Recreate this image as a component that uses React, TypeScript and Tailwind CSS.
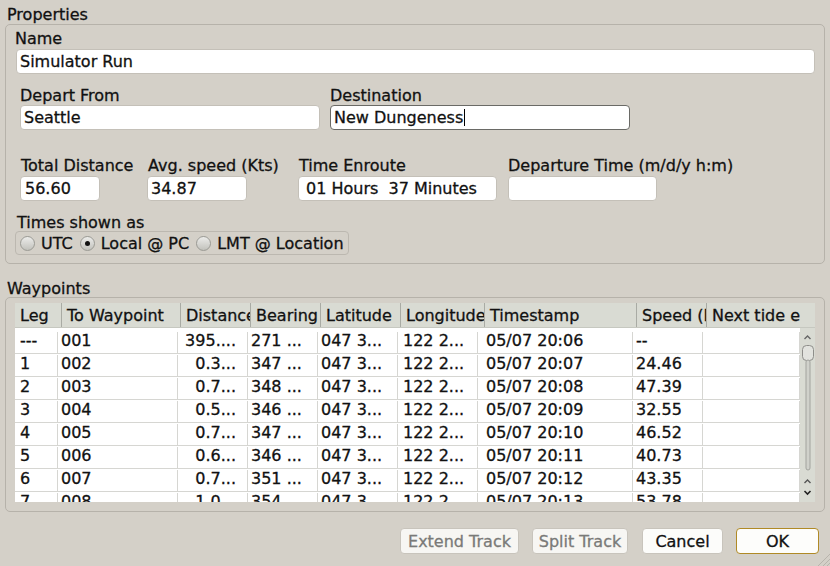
const rows = [
  ["---", "001", "395....", "271 ...", "047 3...", "122 2...", "05/07 20:06", "--"],
  ["1", "002", "0.3...", "347 ...", "047 3...", "122 2...", "05/07 20:07", "24.46"],
  ["2", "003", "0.7...", "348 ...", "047 3...", "122 2...", "05/07 20:08", "47.39"],
  ["3", "004", "0.5...", "346 ...", "047 3...", "122 2...", "05/07 20:09", "32.55"],
  ["4", "005", "0.7...", "347 ...", "047 3...", "122 2...", "05/07 20:10", "46.52"],
  ["5", "006", "0.6...", "346 ...", "047 3...", "122 2...", "05/07 20:11", "40.73"],
  ["6", "007", "0.7...", "351 ...", "047 3...", "122 2...", "05/07 20:12", "43.35"],
  ["7", "008", "1.0...", "354 ...", "047 3...", "122 2...", "05/07 20:13", "53.78"],
];

function Field({ children, className = "" }: { children?: React.ReactNode; className?: string }) {
  return (
    <div
      className={
        "h-[25px] bg-white rounded-[4px] border border-[#c4c0b8] flex items-center whitespace-nowrap overflow-hidden " +
        className
      }
    >
      {children}
    </div>
  );
}

function Radio({ checked }: { checked?: boolean }) {
  return (
    <span className="w-[15px] h-[15px] rounded-full border border-[#9a9a94] bg-gradient-to-b from-[#ececea] to-[#c2c2bc] flex items-center justify-center shrink-0">
      {checked && <span className="w-[5px] h-[5px] rounded-full bg-[#111]" />}
    </span>
  );
}

function Scrollbar() {
  return (
    <svg width="15" height="174" viewBox="0 0 15 174">
      <rect x="0" y="0" width="15" height="174" fill="#d9dbd3" />
      <path d="M4.5 11 L7.5 8 L10.5 11" stroke="#666" strokeWidth="1.4" fill="none" />
      <rect x="2.5" y="17.5" width="11" height="15" rx="4" fill="#e2e3de" stroke="#8e8e8a" />
      <rect x="6" y="32" width="4" height="110" rx="2" fill="#d0d1cb" stroke="#a2a39e" />
      <path d="M4.5 155 L7.5 152 L10.5 155" stroke="#555" strokeWidth="1.4" fill="none" />
      <path d="M4.5 163 L7.5 166 L10.5 163" stroke="#222" strokeWidth="1.6" fill="none" />
    </svg>
  );
}

const headW = ["w-[46px]", "w-[119px]", "w-[70px]", "w-[70px]", "w-[80px]", "w-[84px]", "w-[152px]", "w-[70px]", "w-[94px]"];
const heads = ["Leg", "To Waypoint", "Distance", "Bearing", "Latitude", "Longitude", "Timestamp", "Speed (Kts)", "Next tide event"];
const cellCls = [
  "w-[43px] pl-[5px]",
  "w-[120px] pl-[3px]",
  "w-[70px] pr-[11px] text-right",
  "w-[70px] pl-[3px]",
  "w-[80px] pl-[3px]",
  "w-[80px] pl-[5px]",
  "w-[155px] pl-[8px]",
  "w-[70px] pl-[3px]",
  "w-[97px]",
];

export default function App() {
  return (
    <div
      className="relative w-[830px] h-[566px] bg-[#d4d0c8] text-[16px] leading-[18px] text-[#111] overflow-hidden [-webkit-text-stroke-width:0.3px]"
      style={{ fontFamily: '"DejaVu Sans", Verdana, sans-serif' }}
    >
      <div className="pl-[7px] pt-[6px] h-[24px]">Properties</div>

      <div className="mx-[5px] h-[240px] border border-[#b6b2aa] rounded-[5px] pl-[9px] pr-[9px] pt-[5px]">
        <div>Name</div>
        <Field className="mt-[1px] ml-[1px] pl-[3px]">Simulator Run</Field>

        <div className="mt-[13px] ml-[5px] flex gap-[10px]">
          <div className="w-[300px]">
            <div>Depart From</div>
            <Field className="pl-[3px]">Seattle</Field>
          </div>
          <div className="w-[300px]">
            <div>Destination</div>
            <Field className="pl-[3px] !border-[#6a6a66]">
              New Dungeness
              <span className="w-[1px] h-[17px] bg-black ml-[1px]" />
            </Field>
          </div>
        </div>

        <div className="mt-[27px] ml-[5px] flex">
          <div className="w-[127px]">
            <div className="pl-[1px]">Total Distance</div>
            <Field className="mt-[1px] w-[80px] pl-[4px]">56.60</Field>
          </div>
          <div className="w-[151px]">
            <div className="pl-[1px]">Avg. speed (Kts)</div>
            <Field className="mt-[1px] w-[100px] pl-[3px]">34.87</Field>
          </div>
          <div className="w-[210px]">
            <div className="pl-[1px]">Time Enroute</div>
            <Field className="mt-[1px] w-[199px] pl-[7px] whitespace-pre">01 Hours  37 Minutes</Field>
          </div>
          <div>
            <div>Departure Time (m/d/y h:m)</div>
            <Field className="mt-[1px] w-[149px]" />
          </div>
        </div>

        <div className="mt-[13px] pl-[2px]">Times shown as</div>
        <div className="-mt-[1px] w-[334px] h-[24px] border border-[#bcb8b0] rounded-[4px] flex items-center pl-[4px] pt-[1px]">
          <Radio />
          <span className="ml-[6px]">UTC</span>
          <span className="ml-[7px]"><Radio checked /></span>
          <span className="ml-[6px]">Local @ PC</span>
          <span className="ml-[7px]"><Radio /></span>
          <span className="ml-[6px]">LMT @ Location</span>
        </div>
      </div>

      <div className="mt-[16px] pl-[7px] h-[17px]">Waypoints</div>

      <div className="mx-[5px] h-[215px] border border-[#b6b2aa] rounded-[5px] pl-[9px] pt-[5px]">
        <div className="w-[800px] h-[199px] overflow-hidden bg-white">
          <div className="flex h-[25px] bg-[#d9dbd3] border-b border-[#c6c8c0]">
            {heads.map((h, i) => (
              <div
                key={h}
                className={
                  headW[i] +
                  " pl-[5px] pt-[4px] whitespace-nowrap overflow-hidden shrink-0 " +
                  (i > 0 ? "border-l border-[#a9aba4]" : "")
                }
              >
                {h}
              </div>
            ))}
            <div className="w-[15px] shrink-0" />
          </div>
          <div className="flex">
            <div className="w-[785px]">
              {rows.map((r, ri) => (
                <div
                  key={ri}
                  className={
                    "flex border-b border-[#d6d6d2] " + (ri === 0 ? "h-[26px] pt-[4px]" : "h-[23px] pt-[1px]")
                  }
                >
                  {cellCls.map((c, ci) => (
                    <div
                      key={ci}
                      className={c + " shrink-0 whitespace-nowrap overflow-hidden border-r border-[#d6d6d2]"}
                    >
                      {r[ci] ?? ""}
                    </div>
                  ))}
                </div>
              ))}
            </div>
            <Scrollbar />
          </div>
        </div>
      </div>

      <div className="mt-[16px] flex justify-end pr-[11px] text-center">
        <div className="w-[119px] h-[26px] leading-[26px] rounded-[4px] border border-[#c8c4bc] bg-[#f7f6f3] text-[#7a7a78]">
          Extend Track
        </div>
        <div className="ml-[13px] w-[96px] h-[26px] leading-[26px] rounded-[4px] border border-[#c8c4bc] bg-[#f7f6f3] text-[#7a7a78]">
          Split Track
        </div>
        <div className="ml-[14px] w-[81px] h-[26px] leading-[26px] rounded-[4px] border border-[#c8c4bc] bg-[#fcfcfa]">
          Cancel
        </div>
        <div className="ml-[13px] w-[83px] h-[26px] leading-[26px] rounded-[4px] border border-[#b08a26] bg-[#fdfdfb]">
          OK
        </div>
      </div>

      <svg className="absolute right-0 bottom-0" width="14" height="14" viewBox="0 0 14 14">
        <path d="M14 2 L2 14 M14 7 L7 14 M14 11 L11 14" stroke="#b8b4ac" strokeWidth="1" />
      </svg>
    </div>
  );
}
